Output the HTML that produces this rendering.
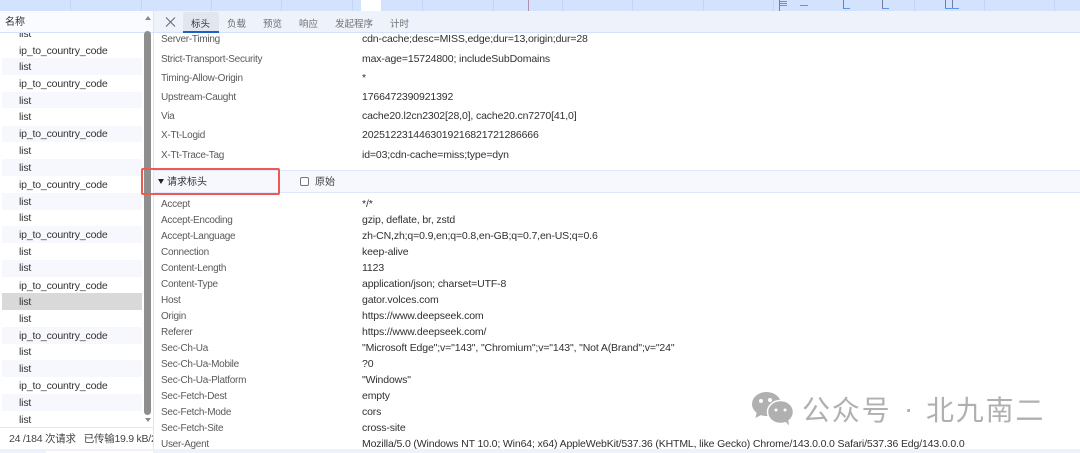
<!DOCTYPE html>
<html lang="zh-CN">
<head>
<meta charset="utf-8">
<style>
html,body{margin:0;padding:0;background:#fff}
body{width:1080px;height:453px;overflow:hidden;position:relative;font-family:"Liberation Sans","Noto Sans CJK SC",sans-serif;font-size:10.5px;color:#333}
.a{position:absolute}
.t{position:absolute;white-space:nowrap;line-height:14px;height:14px}
.band{position:absolute;left:2px;width:140px;background:#f6f8fe}
.k{color:#5a5a5a;left:161px;font-size:10px;letter-spacing:-.27px;margin-top:2px}
.v{color:#303030;left:362px;font-size:10.5px;letter-spacing:-.14px;margin-top:1px}
.n{left:19px;color:#333;font-size:10.5px;letter-spacing:-.17px;margin-top:1px}
.tab{position:absolute;top:18px;font-size:9.5px;color:#707070;line-height:14px;white-space:nowrap}
.g{position:absolute;top:0;width:1px;height:11px;background:#c3d4f5}
.m{position:absolute;background:#7a78a8}
.b{position:absolute;background:#5d95ee}
.wm{position:absolute;white-space:nowrap;line-height:32px;height:32px;top:393px;font-size:28px;letter-spacing:1.800px;color:#b0b0b0;font-family:"Noto Sans CJK SC","Liberation Sans",sans-serif}
</style>
</head>
<body>
<!-- top timeline -->
<div class="a" style="left:0;top:0;width:1080px;height:11px;background:#d3e2fd"></div>
<div class="g" style="left:70px"></div><div class="g" style="left:141px"></div><div class="g" style="left:211px"></div><div class="g" style="left:281px"></div><div class="g" style="left:352px"></div><div class="g" style="left:422px"></div><div class="g" style="left:493px"></div><div class="g" style="left:562px"></div><div class="g" style="left:632px"></div><div class="g" style="left:703px"></div><div class="g" style="left:773px"></div><div class="g" style="left:914px"></div><div class="g" style="left:984px"></div><div class="g" style="left:1054px"></div>
<div class="a" style="left:361px;top:0;width:20px;height:11px;background:#fff"></div>
<div class="a" style="left:528px;top:0;width:1px;height:11px;background:#b58fb0"></div>
<div class="m" style="left:779px;top:0;width:1px;height:11px"></div>
<div class="b" style="left:780px;top:1px;width:7px;height:1px"></div>
<div class="b" style="left:780px;top:3px;width:7px;height:1px"></div>
<div class="b" style="left:780px;top:5px;width:7px;height:1px"></div>
<div class="b" style="left:800px;top:5px;width:8px;height:1px"></div>
<div class="m" style="left:843px;top:0;width:1px;height:9px"></div>
<div class="b" style="left:844px;top:8px;width:6px;height:1px"></div>
<div class="m" style="left:882px;top:0;width:1px;height:9px"></div>
<div class="b" style="left:883px;top:8px;width:6px;height:1px"></div>
<div class="m" style="left:945px;top:0;width:1px;height:9px"></div>
<div class="m" style="left:952px;top:0;width:1px;height:9px"></div>
<div class="b" style="left:945px;top:8px;width:14px;height:1px"></div>

<!-- left list -->
<div class="band" style="top:58px;height:17px"></div>
<div class="band" style="top:92px;height:16px"></div>
<div class="band" style="top:126px;height:16px"></div>
<div class="band" style="top:159px;height:17px"></div>
<div class="band" style="top:193px;height:17px"></div>
<div class="band" style="top:226px;height:17px"></div>
<div class="band" style="top:260px;height:17px"></div>
<div class="band" style="top:293px;height:17px;background:#d9d9d9"></div>
<div class="band" style="top:327px;height:17px"></div>
<div class="band" style="top:360px;height:17px"></div>
<div class="band" style="top:394px;height:17px"></div>
<div class="t n" style="top:26px">list</div>
<div class="t n" style="top:43px">ip_to_country_code</div>
<div class="t n" style="top:59px">list</div>
<div class="t n" style="top:76px">ip_to_country_code</div>
<div class="t n" style="top:93px">list</div>
<div class="t n" style="top:109px">list</div>
<div class="t n" style="top:126px">ip_to_country_code</div>
<div class="t n" style="top:143px">list</div>
<div class="t n" style="top:160px">list</div>
<div class="t n" style="top:177px">ip_to_country_code</div>
<div class="t n" style="top:194px">list</div>
<div class="t n" style="top:210px">list</div>
<div class="t n" style="top:227px">ip_to_country_code</div>
<div class="t n" style="top:244px">list</div>
<div class="t n" style="top:260px">list</div>
<div class="t n" style="top:278px">ip_to_country_code</div>
<div class="t n" style="top:294px">list</div>
<div class="t n" style="top:311px">list</div>
<div class="t n" style="top:328px">ip_to_country_code</div>
<div class="t n" style="top:344px">list</div>
<div class="t n" style="top:361px">list</div>
<div class="t n" style="top:378px">ip_to_country_code</div>
<div class="t n" style="top:395px">list</div>
<div class="t n" style="top:412px">list</div>
<div class="a" style="left:0;top:11px;width:153px;height:21px;background:#fafbfe"></div>
<div class="a" style="left:0;top:32px;width:153px;height:1px;background:#d5e2fb"></div>
<div class="t" style="left:5px;top:16px;color:#333;font-size:10px">名称</div>

<!-- scrollbar -->
<div class="a" style="left:144px;top:31px;width:7px;height:384px;border-radius:3.500px;background:#8e8e8e"></div>
<div class="a" style="left:145px;top:16px;width:0;height:0;border-left:3px solid transparent;border-right:3px solid transparent;border-bottom:4px solid #8a8a8a"></div>
<div class="a" style="left:145px;top:418px;width:0;height:0;border-left:3px solid transparent;border-right:3px solid transparent;border-top:4px solid #8a8a8a"></div>

<!-- status bar -->
<div class="a" style="left:0;top:427px;width:153px;height:1px;background:#dfe8fb"></div>
<div class="a" style="left:0;top:428px;width:153px;height:21px;overflow:hidden;background:#fff">
<div class="t" style="left:9px;top:4px;color:#444;font-size:10.5px;letter-spacing:-.25px">24 /184 次请求&nbsp;&nbsp;&nbsp;已传输19.9 kB/2</div>
</div>
<div class="a" style="left:0;top:449px;width:1080px;height:4px;background:#edf2fc"></div>
<div class="a" style="left:46px;top:451px;width:107px;height:2px;background:#fff"></div>

<!-- right pane divider -->
<div class="a" style="left:153px;top:11px;width:1px;height:438px;background:#dbe5f9"></div>

<!-- response headers -->
<div class="t k" style="top:31px">Server-Timing</div><div class="t v" style="top:31px">cdn-cache;desc=MISS,edge;dur=13,origin;dur=28</div>
<div class="t k" style="top:51px">Strict-Transport-Security</div><div class="t v" style="top:51px">max-age=15724800; includeSubDomains</div>
<div class="t k" style="top:70px">Timing-Allow-Origin</div><div class="t v" style="top:70px">*</div>
<div class="t k" style="top:89px">Upstream-Caught</div><div class="t v" style="top:89px">1766472390921392</div>
<div class="t k" style="top:108px">Via</div><div class="t v" style="top:108px">cache20.l2cn2302[28,0], cache20.cn7270[41,0]</div>
<div class="t k" style="top:127px">X-Tt-Logid</div><div class="t v" style="top:127px">2025122314463019216821721286666</div>
<div class="t k" style="top:147px">X-Tt-Trace-Tag</div><div class="t v" style="top:147px">id=03;cdn-cache=miss;type=dyn</div>

<!-- tab bar -->
<div class="a" style="left:154px;top:11px;width:926px;height:21px;background:#eef2fb"></div>
<div class="a" style="left:154px;top:32px;width:926px;height:1px;background:#d5e2fb"></div>
<svg class="a" style="left:165px;top:16px" width="12" height="12" viewBox="0 0 12 12"><path d="M1 1.5L10 10.500M10 1.500L1 10.500" stroke="#666" stroke-width="1" fill="none"/></svg>
<div class="a" style="left:183px;top:12px;width:36px;height:20px;background:#e2e6ef;border-radius:2px 2px 0 0"></div>
<div class="a" style="left:183px;top:31px;width:36px;height:2px;background:#1a62c8"></div>
<div class="tab" style="left:191px;color:#333">标头</div>
<div class="tab" style="left:227px">负载</div>
<div class="tab" style="left:263px">预览</div>
<div class="tab" style="left:299px">响应</div>
<div class="tab" style="left:335px">发起程序</div>
<div class="tab" style="left:390px">计时</div>

<!-- section header -->
<div class="a" style="left:154px;top:170px;width:926px;height:23px;background:#f6f8fe;border-top:1px solid #dfe8fb;border-bottom:1px solid #dfe8fb;box-sizing:border-box"></div>
<div class="a" style="left:158px;top:179px;width:0;height:0;border-left:3px solid transparent;border-right:3px solid transparent;border-top:5px solid #222"></div>
<div class="t" style="left:167px;top:176px;font-size:10px;color:#333">请求标头</div>
<div class="a" style="left:300px;top:177px;width:7px;height:7px;border:1px solid #777;border-radius:2px;background:#fff"></div>
<div class="t" style="left:315px;top:176px;font-size:10px;color:#444">原始</div>
<div class="a" style="left:141px;top:168px;width:135px;height:23px;border:2px solid #ee5a52;border-radius:2px"></div>

<!-- request headers -->
<div class="t k" style="top:196px">Accept</div><div class="t v" style="top:196px">*/*</div>
<div class="t k" style="top:212px">Accept-Encoding</div><div class="t v" style="top:212px">gzip, deflate, br, zstd</div>
<div class="t k" style="top:228px">Accept-Language</div><div class="t v" style="top:228px">zh-CN,zh;q=0.9,en;q=0.8,en-GB;q=0.7,en-US;q=0.6</div>
<div class="t k" style="top:244px">Connection</div><div class="t v" style="top:244px">keep-alive</div>
<div class="t k" style="top:260px">Content-Length</div><div class="t v" style="top:260px">1123</div>
<div class="t k" style="top:276px">Content-Type</div><div class="t v" style="top:276px">application/json; charset=UTF-8</div>
<div class="t k" style="top:292px">Host</div><div class="t v" style="top:292px">gator.volces.com</div>
<div class="t k" style="top:308px">Origin</div><div class="t v" style="top:308px">https://www.deepseek.com</div>
<div class="t k" style="top:324px">Referer</div><div class="t v" style="top:324px">https://www.deepseek.com/</div>
<div class="t k" style="top:340px">Sec-Ch-Ua</div><div class="t v" style="top:340px">"Microsoft Edge";v="143", "Chromium";v="143", "Not A(Brand";v="24"</div>
<div class="t k" style="top:356px">Sec-Ch-Ua-Mobile</div><div class="t v" style="top:356px">?0</div>
<div class="t k" style="top:372px">Sec-Ch-Ua-Platform</div><div class="t v" style="top:372px">"Windows"</div>
<div class="t k" style="top:388px">Sec-Fetch-Dest</div><div class="t v" style="top:388px">empty</div>
<div class="t k" style="top:404px">Sec-Fetch-Mode</div><div class="t v" style="top:404px">cors</div>
<div class="t k" style="top:420px">Sec-Fetch-Site</div><div class="t v" style="top:420px">cross-site</div>
<div class="t k" style="top:436px">User-Agent</div><div class="t v" style="top:436px">Mozilla/5.0 (Windows NT 10.0; Win64; x64) AppleWebKit/537.36 (KHTML, like Gecko) Chrome/143.0.0.0 Safari/537.36 Edg/143.0.0.0</div>

<!-- watermark -->
<svg class="a" style="left:752px;top:392px" width="42" height="34" viewBox="0 0 42 34">
<ellipse cx="14.500" cy="12" rx="14.500" ry="12" fill="#b0b0b0"/>
<path d="M5 19L3.500 26L11 22z" fill="#b0b0b0"/>
<ellipse cx="28.500" cy="20" rx="13" ry="11.500" fill="#b0b0b0" stroke="#fff" stroke-width="1.500"/>
<path d="M33 29L37 33.500L36 26z" fill="#b0b0b0"/>
<circle cx="9" cy="9" r="2" fill="#fff"/><circle cx="18" cy="8" r="2" fill="#fff"/>
<circle cx="24" cy="18" r="1.500" fill="#fff"/><circle cx="33" cy="18" r="1.500" fill="#fff"/>
</svg>
<div class="wm" style="left:802px">公众号</div>
<div class="wm" style="left:904px;font-family:'Liberation Sans',sans-serif">·</div>
<div class="wm" style="left:926px">北九南二</div>
</body>
</html>
